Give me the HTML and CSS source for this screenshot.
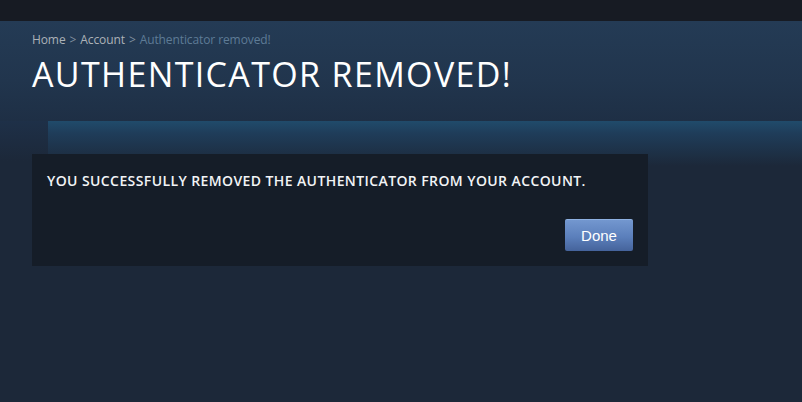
FILE: index.html
```html
<!DOCTYPE html>
<html>
<head>
<meta charset="utf-8">
<link rel="stylesheet" href="styles.css">
</head>
<body>
<div class="topbar"></div>
<div class="header">
  <div class="breadcrumb"><a class="crumb">Home</a><span class="sep">&gt;</span><a class="crumb">Account</a><span class="sep">&gt;</span><span class="current">Authenticator removed!</span></div>
  <h1 class="title">AUTHENTICATOR REMOVED!</h1>
</div>
<div class="main">
  <div class="box">
    <p class="message">YOU SUCCESSFULLY REMOVED THE AUTHENTICATOR FROM YOUR ACCOUNT.</p>
    <div class="actions"><button class="done">Done</button></div>
  </div>
</div>
</body>
</html>
```
FILE: styles.css
```css
html, body {
  margin: 0;
  padding: 0;
  height: 100%;
}
body {
  background: #1c2839;
  font-family: "Open Sans", "Liberation Sans", sans-serif;
  overflow: hidden;
}
.topbar {
  height: 21px;
  background: #171b23;
}
.header {
  height: 100px;
  box-sizing: border-box;
  padding: 10px 0 0 32px;
  background: linear-gradient(to bottom, #243b55 0%, #21354d 60%, #1e2f45 100%);
}
.breadcrumb {
  font-size: 12px;
  line-height: 17px;
  color: #8f98a0;
  display: flex;
  gap: 4px;
  letter-spacing: -0.1px;
}
.crumb {
  color: #acb2b8;
}
.sep {
  color: #8190a0;
}
.current {
  color: #5e7b96;
}
.title {
  margin: 6px 0 0 0;
  font-size: 34px;
  line-height: 40px;
  font-weight: 400;
  letter-spacing: 1.35px;
  color: #ffffff;
}
.main {
  padding: 33px 0 0 32px;
  background:
    linear-gradient(to bottom, #204b6b 0px, #1f3d5a 12px, rgba(28,40,57,0) 45px) 48px 0 / 100% 60px no-repeat,
    linear-gradient(to bottom, #1e3048 0px, rgba(28,40,57,0) 40px) 0 0 / 48px 60px no-repeat,
    #1c2839;
}
.box {
  width: 616px;
  height: 112px;
  box-sizing: border-box;
  background: #151d28;
  padding: 19px 15px 0 15px;
  display: flex;
  flex-direction: column;
}
.message {
  margin: 0;
  font-size: 14px;
  line-height: 16px;
  font-weight: 600;
  letter-spacing: 0.4px;
  color: #f2f4f6;
}
.actions {
  display: flex;
  justify-content: flex-end;
  margin-top: 30px;
}
.done {
  width: 68px;
  height: 32px;
  border: none;
  border-radius: 2px;
  border-top: 1px solid #8eb1e2;
  background: linear-gradient(to bottom, #7397cf 0%, #5b7fbb 55%, #45639b 100%);
  color: #ffffff;
  font-family: "Liberation Sans", Arial, sans-serif;
  font-size: 15px;
  padding: 0;
  cursor: pointer;
}
```
